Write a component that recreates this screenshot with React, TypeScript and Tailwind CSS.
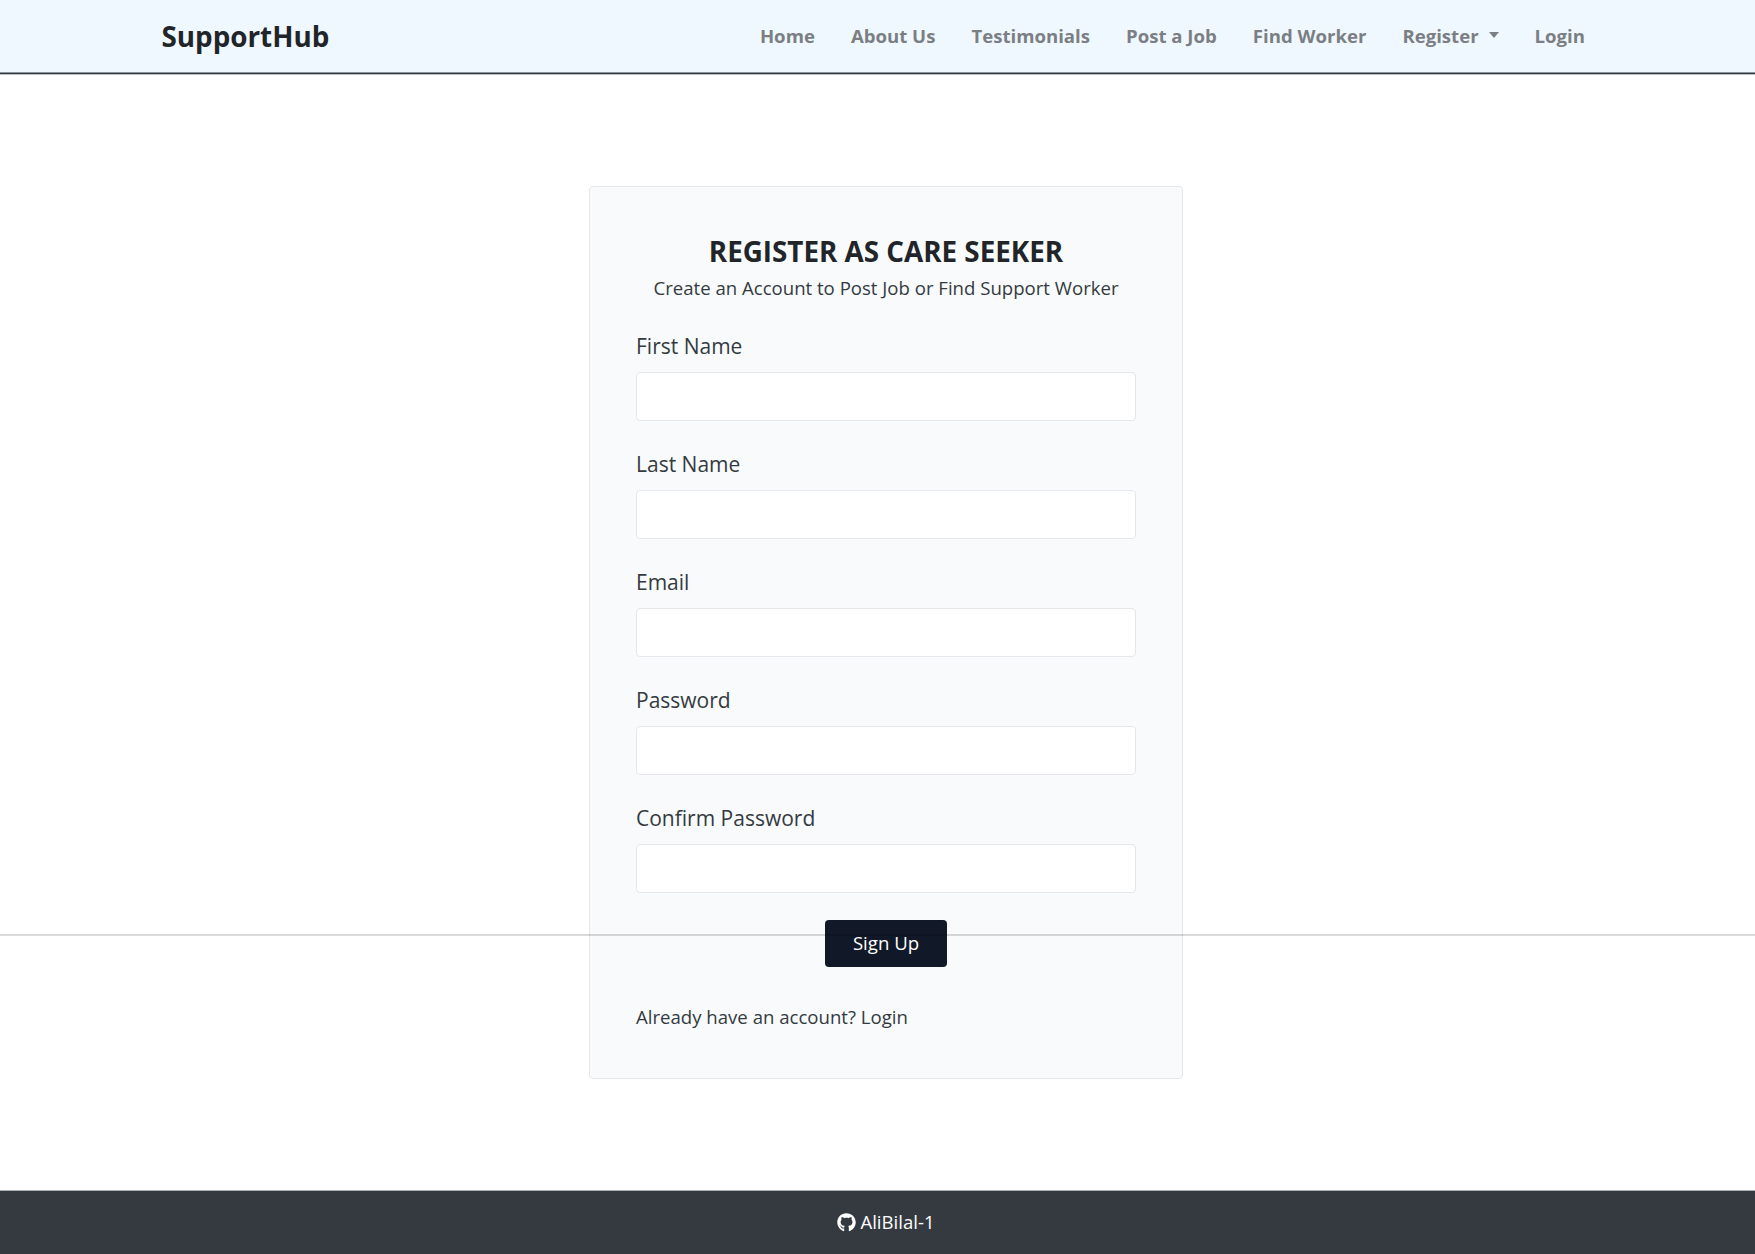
import { FaGithub } from "react-icons/fa";

const links = ["Home", "About Us", "Testimonials", "Post a Job", "Find Worker", "Register", "Login"];
const fields = ["First Name", "Last Name", "Email", "Password", "Confirm Password"];

export default function App() {
  return (
    <div className="relative flex h-[1254px] flex-col bg-white font-['Open_Sans',sans-serif] text-[#212529]">
      <nav className="flex h-[74px] shrink-0 items-center justify-between border-b border-[#343a40] bg-[#f0f8ff] pr-[170px] pl-[161.5px] shadow-[0_1px_0_#b9bec3,inset_0_-1px_0_#8d949b]">
        <a className="pt-px text-[27.8px] font-bold text-[#212529]">SupportHub</a>
        <div className="flex gap-9 pb-px text-[18.6px] font-bold text-[#7b7f84]">
          {links.map((l) => (
            <a key={l} className="flex items-center">
              {l}
              {l === "Register" && (
                <span className="mb-px ml-[10px] border-x-[5.5px] border-t-[6px] border-x-transparent border-t-[#7b7f84]" />
              )}
            </a>
          ))}
        </div>
      </nav>
      <main className="flex flex-1 justify-center pt-[112px] pl-[17px]">
        <form className="flex h-[893px] w-[594px] flex-col rounded border border-[#e5e7eb] bg-[#f8fafc] px-[46px] pt-[45px]">
          <h1 className="text-center text-[27.8px] leading-[38px] font-bold">REGISTER AS CARE SEEKER</h1>
          <p className="text-center text-[18.6px] leading-[36px] text-[#343a40]">Create an Account to Post Job or Find Support Worker</p>
          <div className="mt-[24px] flex flex-col gap-[28px]">
            {fields.map((f) => (
              <label key={f} className="block h-[90px]">
                <span className="block h-[42px] text-[21px] leading-[33px] text-[#343a40]">{f}</span>
                <input className="block h-[48.5px] w-full rounded border border-[#e5e7eb] bg-white px-3" />
              </label>
            ))}
          </div>
          <button type="button" className="mx-auto mt-[28px] h-[47px] w-[122px] rounded bg-[#111827] pb-[2px] text-[18.6px] text-white">Sign Up</button>
          <p className="mt-[35px] text-[18.6px] leading-[30px] text-[#343a40]">Already have an account? Login</p>
        </form>
      </main>
      <div className="absolute inset-x-0 top-[934px] h-[2px] bg-black/15" />
      <footer className="flex h-[64px] shrink-0 items-center justify-center gap-[4px] border-t border-[#a9afb4] bg-[#343a40] pb-px pl-[17px] text-[18.6px] text-white">
        <FaGithub className="size-[19px]" />
        AliBilal-1
      </footer>
    </div>
  );
}
